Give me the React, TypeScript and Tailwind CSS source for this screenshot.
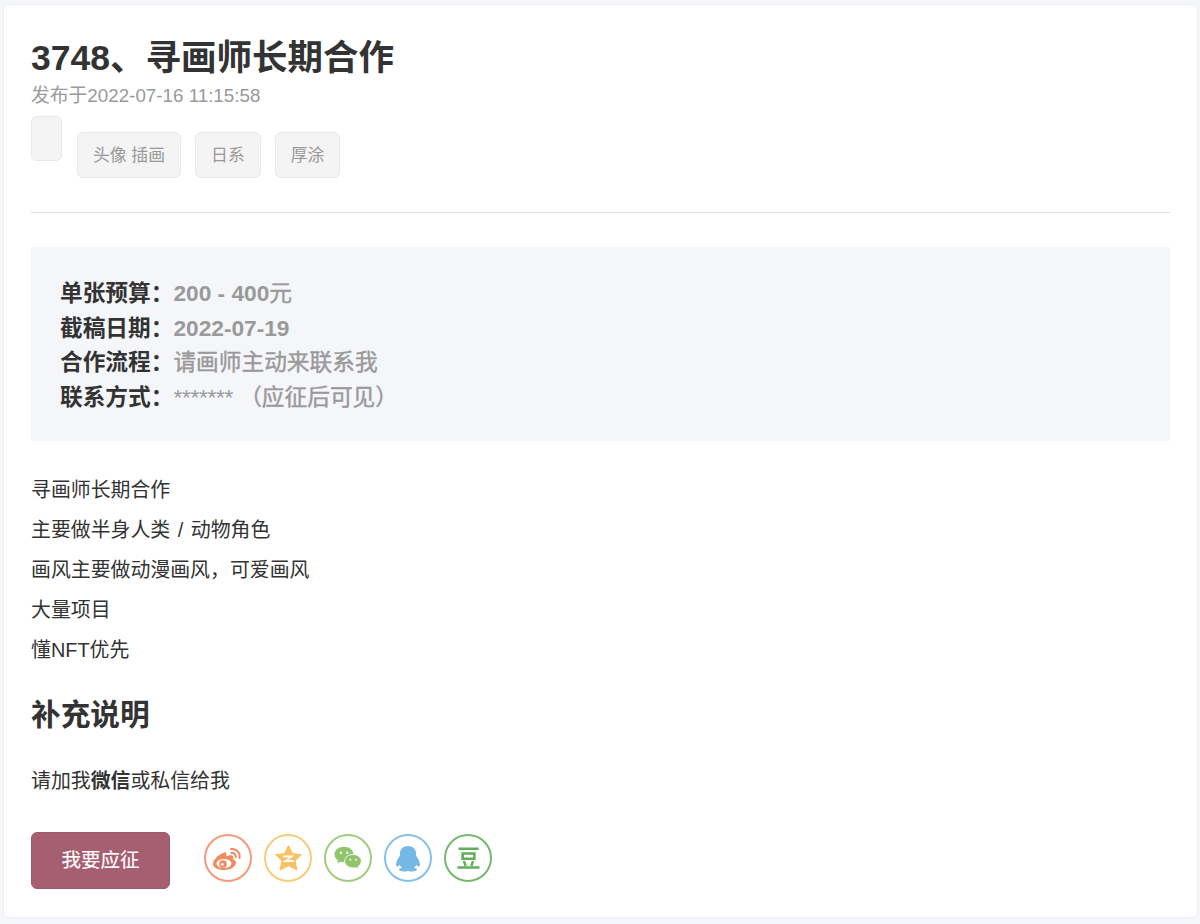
import type { ReactNode } from 'react';

const infoRows = [
  { label: '单张预算：', strong: '200 - 400', stars: '', rest: '元' },
  { label: '截稿日期：', strong: '2022-07-19', stars: '', rest: '' },
  { label: '合作流程：', strong: '', stars: '', rest: '请画师主动来联系我' },
  { label: '联系方式：', strong: '', stars: '*******', rest: '（应征后可见）' },
];

const tags = ['头像 插画', '日系', '厚涂'];

const bodyLines = ['寻画师长期合作', '主要做半身人类 / 动物角色', '画风主要做动漫画风，可爱画风', '大量项目', '懂NFT优先'];

function ShareCircle({ color, children }: { color: string; children: ReactNode }) {
  return (
    <div className="w-[48px] h-[48px] rounded-full border-2 flex items-center justify-center" style={{ borderColor: color }}>
      {children}
    </div>
  );
}

function WeiboIcon() {
  return (
    <svg width="30" height="23" viewBox="0 0 30 23" fill="none">
      <path d="M11 5.500C6 7.500 0 12.500 0 17c0 3.500 5 6 11 6s12-3 12-7.500c0-2-2-2.800-3-3.100.7-2 .5-3.500-1-4-2-.5-4.500.5-6 1 1-3 .5-5-2-3.900z" fill="#f28a60" />
      <ellipse cx="11" cy="16.500" rx="7.500" ry="4.600" fill="#fff" />
      <circle cx="10" cy="17" r="3.800" fill="#f28a60" />
      <circle cx="9.300" cy="17.300" r="1.400" fill="#fff" />
      <path d="M18 2c4.500-.8 9.500 3.200 8.500 9M18.500 6c2.500-.4 4.800 1.500 4.200 4.300" stroke="#f28a60" strokeWidth="2" strokeLinecap="round" />
    </svg>
  );
}

function QzoneIcon() {
  return (
    <svg width="27" height="26" viewBox="0 0 27 26">
      <path d="M13.500 .5L17.500 8.500L26.500 9.700L20 15.800L22 25L13.500 20.800L5 25L7 15.800L.5 9.700L9.500 8.500Z" fill="#f8c264" stroke="#f8c264" strokeLinejoin="round" />
      <path d="M8 10.500h11.500l-6.500 4.600h6l-.8 2H7.500l7-4.700H8.400z" fill="#fff" />
    </svg>
  );
}

function WechatIcon() {
  return (
    <svg width="31" height="27" viewBox="0 0 34 30">
      <path d="M12 2C6 2 1.500 5.800 1.500 10.500c0 2.800 1.600 5 3.900 6.700l-1 3.300 3.700-2c1.300.4 2.500.6 3.900.6 6 0 10.500-3.800 10.500-8.600S18 2 12 2z" fill="#92c46c" />
      <path d="M22 10.500c-5.200 0-9.200 3.300-9.200 7.500s4 7.500 9.200 7.500c1 0 2-.1 3-.4l3.200 2.200-.8-3.300c2.300-1.400 3.900-3.500 3.900-6 0-4.200-4.100-7.500-9.300-7.500z" fill="#92c46c" stroke="#fff" strokeWidth="1" />
      <circle cx="8.500" cy="8.500" r="1.300" fill="#fff" />
      <circle cx="15.500" cy="8.500" r="1.300" fill="#fff" />
      <circle cx="19" cy="16.500" r="1.100" fill="#fff" />
      <circle cx="25.500" cy="16.500" r="1.100" fill="#fff" />
    </svg>
  );
}

function QqIcon() {
  return (
    <svg width="28" height="27" viewBox="0 0 28 30" preserveAspectRatio="none">
      <path d="M14 1c-5 0-8 3.600-8 8.500 0 1 0 1.800-.3 2.700C4 15 2 18.500 2 21.500c0 1.500.6 2.300 1.300 2.300.8 0 1.700-.9 2.300-1.900.4 1.300 1.200 2.400 2.200 3.300-1.800.6-2.800 1.500-2.800 2.400C5 29 7.500 29.500 10 29.500c1.800 0 3-.4 4-1 1 .6 2.200 1 4 1 2.500 0 5-.5 5-1.900 0-.9-1-1.800-2.800-2.400 1-.9 1.800-2 2.200-3.300.6 1 1.500 1.900 2.300 1.900.7 0 1.300-.8 1.300-2.300 0-3-2-6.500-3.700-9.300-.3-.9-.3-1.700-.3-2.700C22 4.600 19 1 14 1z" fill="#74b8e6" />
    </svg>
  );
}

function DoubanIcon() {
  return (
    <svg width="23" height="22" viewBox="0 0 24 23">
      <path d="M1.500 .5h21v2.700h-21zM4.500 5.500h15v8h-15zm2.800 2.500v3h9.400V8zM.5 20h23v2.800H.5zM6 15l2.500-.7 1.800 5-2.600.7zM15.500 14.300l2.500.7-1.700 5-2.600-.7z" fill="#62af5b" fillRule="evenodd" />
    </svg>
  );
}

export default function App() {
  return (
    <div className="w-full h-[924px] overflow-hidden bg-[#f5f6fa] pl-[3px] pr-[2px] pt-[4px] font-['Liberation_Sans','Noto_Sans_CJK_SC',sans-serif] text-[#333333]">
      <div className="h-[914px] bg-white rounded-[5px] border border-[#eceef6] px-[27px]">
        <h1 className="pt-[31px] text-[35.5px] leading-[44px] font-bold">3748、寻画师长期合作</h1>
        <div className="mt-[5px] text-[18.8px] leading-[22px] text-[#999999]">发布于2022-07-16 11:15:58</div>

        <div className="flex items-start h-[62px] mt-[9px]">
          <div className="w-[31px] h-[45px] rounded-[6px] border border-[#e8e8e8] bg-[#f4f4f4]" />
          <div className="flex gap-[14px] ml-[15px] mt-[16px]">
            {tags.map((t) => (
              <div key={t} className="h-[46px] px-[15px] rounded-[6px] border border-[#e8e8e8] bg-[#f4f4f4] text-[16.85px] leading-[46px] text-[#999999]">
                {t}
              </div>
            ))}
          </div>
        </div>

        <div className="mt-[34px] border-t border-[#dcdfe6]" />

        <div className="mt-[34px] h-[194px] bg-[#f5f6fa] px-[29px] pt-[29px] text-[22.7px] leading-[34.5px]">
          {infoRows.map((r) => (
            <div key={r.label} className="h-[34.5px] whitespace-nowrap">
              <span className="font-bold text-[#333333]">{r.label}</span>
              <span className="font-bold text-[#999999]">{r.strong}</span>
              {r.stars && <span className="mr-[6px] tracking-[-0.3px] text-[#999999]">{r.stars}</span>}
              <span className="text-[#999999] [-webkit-text-stroke:0.4px_#999999]">{r.rest}</span>
            </div>
          ))}
        </div>

        <div className="mt-[29px] text-[19.9px] leading-[40px] [word-spacing:2px]">
          {bodyLines.map((l) => (
            <div key={l}>{l}</div>
          ))}
        </div>

        <h2 className="mt-[25px] text-[29.7px] leading-[40px] font-bold">补充说明</h2>

        <div className="mt-[26px] text-[19.9px] leading-[40px]">
          请加我<b>微信</b>或私信给我
        </div>

        <div className="mt-[31px] flex items-start">
          <button className="w-[139px] h-[57px] rounded-[6px] bg-[#a65e71] text-white text-[19.5px] border border-[#a05a6d] [-webkit-text-stroke:0.15px_#ffffff]">我要应征</button>
          <div className="ml-[34px] mt-[2px] flex gap-[12px]">
            <ShareCircle color="#f4997a"><WeiboIcon /></ShareCircle>
            <ShareCircle color="#f9cb7d"><QzoneIcon /></ShareCircle>
            <ShareCircle color="#a0cc7e"><WechatIcon /></ShareCircle>
            <ShareCircle color="#86c1ea"><QqIcon /></ShareCircle>
            <ShareCircle color="#74b86e"><DoubanIcon /></ShareCircle>
          </div>
        </div>
      </div>
    </div>
  );
}
